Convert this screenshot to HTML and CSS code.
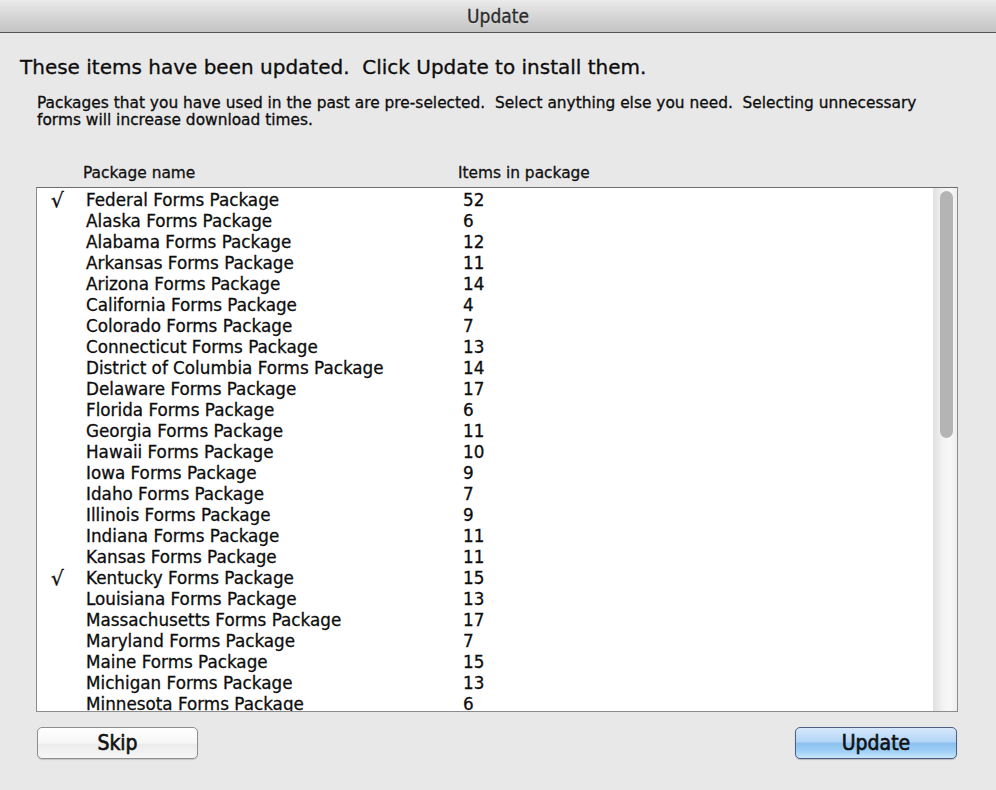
FILE: index.html
```html
<!DOCTYPE html>
<html>
<head>
<meta charset="utf-8">
<title>Update</title>
<link rel="stylesheet" href="styles.css">
</head>
<body>
<div class="window">
  <div class="titlebar">Update</div>
  <div class="content">
    <h1 class="heading">These items have been updated.&nbsp; Click Update to install them.</h1>
    <p class="desc">Packages that you have used in the past are pre-selected.&nbsp; Select anything else you need.&nbsp; Selecting unnecessary forms will increase download times.</p>
    <div class="colheads">
      <span class="colhead-name">Package name</span>
      <span class="colhead-count">Items in package</span>
    </div>
    <div class="listbox">
      <div class="rows">
        <div class="row"><span class="check">√</span><span class="name">Federal Forms Package</span><span class="count">52</span></div>
        <div class="row"><span class="check"></span><span class="name">Alaska Forms Package</span><span class="count">6</span></div>
        <div class="row"><span class="check"></span><span class="name">Alabama Forms Package</span><span class="count">12</span></div>
        <div class="row"><span class="check"></span><span class="name">Arkansas Forms Package</span><span class="count">11</span></div>
        <div class="row"><span class="check"></span><span class="name">Arizona Forms Package</span><span class="count">14</span></div>
        <div class="row"><span class="check"></span><span class="name">California Forms Package</span><span class="count">4</span></div>
        <div class="row"><span class="check"></span><span class="name">Colorado Forms Package</span><span class="count">7</span></div>
        <div class="row"><span class="check"></span><span class="name">Connecticut Forms Package</span><span class="count">13</span></div>
        <div class="row"><span class="check"></span><span class="name">District of Columbia Forms Package</span><span class="count">14</span></div>
        <div class="row"><span class="check"></span><span class="name">Delaware Forms Package</span><span class="count">17</span></div>
        <div class="row"><span class="check"></span><span class="name">Florida Forms Package</span><span class="count">6</span></div>
        <div class="row"><span class="check"></span><span class="name">Georgia Forms Package</span><span class="count">11</span></div>
        <div class="row"><span class="check"></span><span class="name">Hawaii Forms Package</span><span class="count">10</span></div>
        <div class="row"><span class="check"></span><span class="name">Iowa Forms Package</span><span class="count">9</span></div>
        <div class="row"><span class="check"></span><span class="name">Idaho Forms Package</span><span class="count">7</span></div>
        <div class="row"><span class="check"></span><span class="name">Illinois Forms Package</span><span class="count">9</span></div>
        <div class="row"><span class="check"></span><span class="name">Indiana Forms Package</span><span class="count">11</span></div>
        <div class="row"><span class="check"></span><span class="name">Kansas Forms Package</span><span class="count">11</span></div>
        <div class="row"><span class="check">√</span><span class="name">Kentucky Forms Package</span><span class="count">15</span></div>
        <div class="row"><span class="check"></span><span class="name">Louisiana Forms Package</span><span class="count">13</span></div>
        <div class="row"><span class="check"></span><span class="name">Massachusetts Forms Package</span><span class="count">17</span></div>
        <div class="row"><span class="check"></span><span class="name">Maryland Forms Package</span><span class="count">7</span></div>
        <div class="row"><span class="check"></span><span class="name">Maine Forms Package</span><span class="count">15</span></div>
        <div class="row"><span class="check"></span><span class="name">Michigan Forms Package</span><span class="count">13</span></div>
        <div class="row"><span class="check"></span><span class="name">Minnesota Forms Package</span><span class="count">6</span></div>
      </div>
      <div class="scrollbar"><div class="thumb"></div></div>
    </div>
    <div class="buttons">
      <button class="btn btn-skip">Skip</button>
      <button class="btn btn-default">Update</button>
    </div>
  </div>
</div>
</body>
</html>
```

FILE: styles.css
```css
html, body {
  margin: 0;
  padding: 0;
  height: 100%;
}
body {
  background: #e8e8e8;
  font-family: "DejaVu Sans", "Liberation Sans", sans-serif;
  color: #111;
  -webkit-text-stroke: 0.3px currentColor;
}
.window {
  height: 790px;
  overflow: hidden;
  background: #e8e8e8;
}
.titlebar {
  height: 32px;
  line-height: 32px;
  text-align: center;
  font-family: "DejaVu Sans Condensed", "DejaVu Sans", sans-serif;
  font-size: 19px;
  color: #2b2b2b;
  background: linear-gradient(#ebebeb, #d6d6d6 50%, #c4c4c4);
  border-bottom: 1px solid #555;
  text-shadow: 0 1px 0 rgba(255,255,255,0.5);
}
.content {
  padding: 22px 38px 0 20px;
}
.heading {
  margin: 0;
  font-size: 20px;
  font-weight: normal;
  line-height: 24px;
  color: #0d0d0d;
}
.desc {
  margin: 16px 0 0 17px;
  font-size: 15.4px;
  line-height: 17px;
  color: #0d0d0d;
  max-width: 900px;
}
.colheads {
  margin-top: 35px;
  display: grid;
  grid-template-columns: 63px 375px 1fr;
  font-size: 15.4px;
  line-height: 18px;
  color: #111;
}
.colhead-name { grid-column: 2; }
.colhead-count { grid-column: 3; }
.listbox {
  margin: 5px 0 0 16px;
  height: 523px;
  border: 1px solid #8c8c8c;
  border-top-color: #6e6e6e;
  background: #fff;
  display: flex;
  overflow: hidden;
}
.rows {
  flex: 1;
  padding-top: 2px;
  overflow: hidden;
}
.row {
  display: grid;
  grid-template-columns: 49px 377px 1fr;
  height: 21px;
  line-height: 21px;
  font-size: 16.8px;
  color: #0d0d0d;
  white-space: nowrap;
}
.check {
  padding-left: 14px;
  font-size: 20px;
}
.scrollbar {
  width: 24px;
  flex: none;
  background: linear-gradient(90deg, #e2e2e2, #f3f3f3 40%, #f8f8f8 70%, #eeeeee);
  border-left: 1px solid #e4e4e4;
  box-sizing: border-box;
  padding: 3px 4px 0 6px;
}
.thumb {
  height: 247px;
  border-radius: 7px;
  background: #b4b4b4;
}
.buttons {
  margin: 15px 0 0 17px;
  display: flex;
  justify-content: space-between;
}
.btn {
  width: 161px;
  height: 32px;
  border-radius: 5px;
  font-family: "DejaVu Sans Condensed", "DejaVu Sans", sans-serif;
  font-size: 21px;
  color: #111;
  padding: 0;
  line-height: 28px;
  cursor: default;
  -webkit-text-stroke: 0.6px currentColor;
}
.btn-skip {
  border: 1px solid #8e8e8e;
  background: linear-gradient(#ffffff, #f6f6f6 50%, #ececec 55%, #f7f7f7);
  box-shadow: 0 1px 1px rgba(0,0,0,0.15);
}
.btn-default {
  width: 162px;
  margin-right: 1px;
  border: 1px solid #4d5d86;
  background: linear-gradient(#d6e8fc, #b3d5f6 45%, #8cc2f0 52%, #9ccdf5 75%, #c8e6fd);
  box-shadow: 0 1px 1px rgba(0,0,0,0.2);
}
```
